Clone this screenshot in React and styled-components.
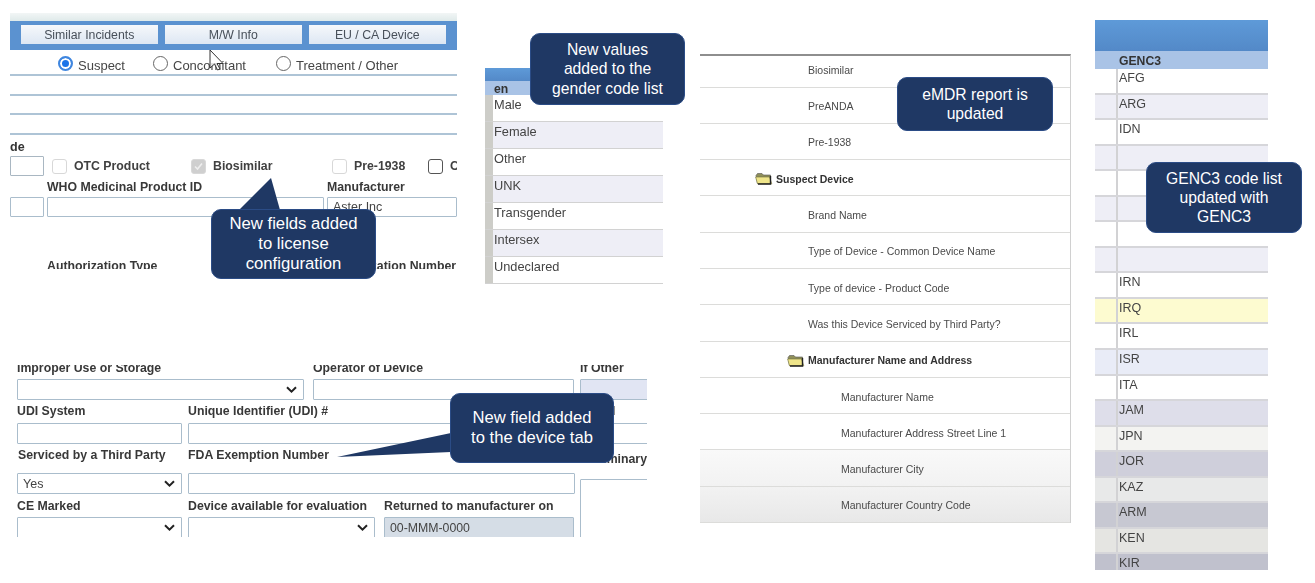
import React from "react";
import styled, { createGlobalStyle } from "styled-components";

const Global = createGlobalStyle`
  html, body { margin: 0; padding: 0; background: #fff; }
  body { font-family: "Liberation Sans", Arial, sans-serif; }
`;

const Canvas = styled.div`
  position: relative;
  width: 1315px;
  height: 583px;
  overflow: hidden;
  background: #fff;
`;

const Shot = styled.section`
  position: absolute;
  left: ${(p) => p.$x}px;
  top: ${(p) => p.$y}px;
  width: ${(p) => p.$w}px;
  height: ${(p) => p.$h}px;
  overflow: hidden;
  background: #fff;
  color: #333;
  filter: blur(0.5px);
`;

const Strip = styled.div`
  height: 8px;
  background: linear-gradient(#f2f6f6, #dfeaea);
`;

const BlueBar = styled.div`
  height: 29px;
  box-sizing: border-box;
  padding: 4px 11px;
  display: flex;
  gap: 7.5px;
  background: #5b92d0;
`;

const TabButton = styled.div`
  width: 136.5px;
  height: 19px;
  display: flex;
  align-items: center;
  justify-content: center;
  font-size: 12.3px;
  color: #48505a;
  background: linear-gradient(#f6f8fb, #dde7f3);
`;

const RadioRow = styled.div`
  height: 26px;
  box-sizing: border-box;
  padding-left: 48px;
  display: flex;
  align-items: center;
  border-bottom: 2px solid #aec4d6;
`;

const RadioItem = styled.div`
  width: ${(p) => p.$w}px;
  display: flex;
  align-items: center;
  gap: 5px;
  font-size: 13px;
  color: #454545;
  padding-top: 6px;
  box-sizing: border-box;
`;

const Radio = styled.span`
  width: 15px;
  height: 15px;
  box-sizing: border-box;
  margin-top: -4px;
  border-radius: 50%;
  flex: none;
  border: ${(p) => (p.$on ? "2px solid #3f86df" : "1px solid #666")};
  box-shadow: ${(p) => (p.$on ? "inset 0 0 0 2px #fff" : "none")};
  background-color: ${(p) => (p.$on ? "#1a73e8" : "#fff")};
`;

const BlankLine = styled.div`
  height: ${(p) => p.$h}px;
  box-sizing: border-box;
  border-bottom: 2px solid #aec4d6;
`;

const TinyLabel = styled.div`
  height: 21px;
  box-sizing: border-box;
  padding-top: 5px;
  font-size: 12.5px;
  line-height: 14px;
  font-weight: 700;
  color: #333;
`;

const Row = styled.div`
  display: flex;
  height: ${(p) => p.$h}px;
  margin-top: ${(p) => p.$mt || 0}px;
  padding-left: ${(p) => p.$pl || 0}px;
`;

const Cell = styled.div`
  width: ${(p) => p.$w}px;
  flex: none;
  margin-left: ${(p) => p.$ml || 0}px;
`;

const Label = styled(Cell)`
  font-size: 12.3px;
  font-weight: 700;
  line-height: ${(p) => p.$lh || 14}px;
  white-space: nowrap;
  color: #383838;
  text-align: ${(p) => p.$align || "left"};
`;

const Field = styled(Cell)`
  height: ${(p) => p.$fh || 20}px;
  margin-top: ${(p) => p.$mt || 0}px;
  box-sizing: border-box;
  border: 1.5px solid ${(p) => p.$line || "#aabdcc"};
  border-radius: 1px;
  background: ${(p) => p.$bg || "#fff"};
  display: flex;
  align-items: center;
  justify-content: space-between;
  padding: 0 6px 0 5px;
  font-size: ${(p) => p.$fs || 12}px;
  color: #444;
  white-space: nowrap;
`;

const CheckItem = styled(Cell)`
  display: flex;
  align-items: center;
  gap: 7px;
  height: 20px;
  font-size: 12.3px;
  font-weight: 700;
  color: #404040;
`;

const Check = styled.span`
  width: 15px;
  height: 15px;
  box-sizing: border-box;
  border-radius: 3px;
  flex: none;
  display: flex;
  align-items: center;
  justify-content: center;
  border: 1px solid ${(p) => (p.$dark ? "#555" : "#d8d8d8")};
  background: ${(p) => (p.$on ? "#cfcfcf" : "#fff")};
`;

const ListBlue = styled.div`
  height: ${(p) => p.$h}px;
  background: linear-gradient(#5e9ad8, #5389c8);
`;

const ListHead = styled.div`
  height: ${(p) => p.$h}px;
  box-sizing: border-box;
  padding-left: ${(p) => p.$pl}px;
  background: #a9c3e6;
  font-size: 12.2px;
  font-weight: 700;
  line-height: ${(p) => p.$h + 2}px;
  color: #333;
`;

const GenderRow = styled.div`
  height: 27px;
  box-sizing: border-box;
  display: flex;
  border-bottom: 1.5px solid #d2d2d2;
  background: ${(p) => (p.$alt ? "#eeeef6" : "#fff")};
`;

const Gutter = styled.div`
  width: 8px;
  flex: none;
  background: #cdcdc8;
`;

const GenderText = styled.div`
  padding: 2px 0 0 1px;
  font-size: 12.8px;
  line-height: 15px;
  color: #444;
`;

const ReportShot = styled(Shot)`
  box-sizing: border-box;
  border-top: 2px solid #8e8e8e;
  border-right: 1px solid #d0d0d0;
`;

const ReportRow = styled.div`
  height: ${(p) => (p.$first ? 31.5 : 36.3)}px;
  box-sizing: border-box;
  display: flex;
  align-items: center;
  padding-left: ${(p) => p.$pl}px;
  padding-top: ${(p) => (p.$first ? 0 : 2)}px;
  padding-bottom: ${(p) => (p.$first ? 3 : 0)}px;
  gap: 3px;
  font-size: 10.5px;
  font-weight: ${(p) => (p.$bold ? 700 : 400)};
  color: ${(p) => (p.$bold ? "#333" : "#4a4a4a")};
  border-bottom: 1.5px solid #dcdcda;
  background: ${(p) => p.$bg || "#fff"};
`;

const CodeRow = styled.div`
  height: 25.55px;
  box-sizing: border-box;
  display: flex;
  border-bottom: 2px solid #d6d6da;
  background: ${(p) => p.$bg};
`;

const CodeSide = styled.div`
  width: 23px;
  flex: none;
  box-sizing: border-box;
  border-right: 2px solid #d2d2d4;
`;

const CodeText = styled.div`
  padding: 2px 0 0 1px;
  font-size: 12.5px;
  line-height: 15px;
  color: #444;
`;

const Callout = styled.aside`
  position: absolute;
  left: ${(p) => p.$x}px;
  top: ${(p) => p.$y}px;
  width: ${(p) => p.$w}px;
  height: ${(p) => p.$h}px;
  box-sizing: border-box;
  display: flex;
  align-items: center;
  justify-content: center;
  text-align: center;
  background: #1f3864;
  border: 1px solid #2b4c86;
  border-radius: 10px;
  color: #fff;
  font-size: ${(p) => p.$fs}px;
  line-height: ${(p) => p.$lh}px;
`;

const Tail = styled.svg`
  position: absolute;
  left: 0;
  top: 0;
  overflow: visible;
  pointer-events: none;
`;

const Cursor = styled.svg`
  position: absolute;
  left: 209px;
  top: 49px;
`;

const Chevron = () => (
  <svg width="11" height="7" viewBox="0 0 11 7">
    <path d="M1 1.2 5.5 5.6 10 1.2" fill="none" stroke="#222" strokeWidth="2" />
  </svg>
);

const Folder = () => (
  <svg width="18" height="13" viewBox="0 0 18 13">
    <path d="M1 3.5 2.5 1.5H7L8.5 3H15.5V11.5H2.5Z" fill="#8f8f5a" stroke="#555" strokeWidth=".6" />
    <path d="M.6 5H14.5L16.8 11.8H2.5Z" fill="#efe58a" stroke="#6d6d3a" strokeWidth=".6" />
    <path d="M15.5 4V12H3" fill="none" stroke="#222" strokeWidth="1.4" />
  </svg>
);

const genders = ["Male", "Female", "Other", "UNK", "Transgender", "Intersex", "Undeclared"];

const report = [
  { t: "Biosimilar", pl: 108 },
  { t: "PreANDA", pl: 108 },
  { t: "Pre-1938", pl: 108 },
  { t: "Suspect Device", pl: 55, folder: true },
  { t: "Brand Name", pl: 108 },
  { t: "Type of Device - Common Device Name", pl: 108 },
  { t: "Type of device - Product Code", pl: 108 },
  { t: "Was this Device Serviced by Third Party?", pl: 108 },
  { t: "Manufacturer Name and Address", pl: 87, folder: true },
  { t: "Manufacturer Name", pl: 141 },
  { t: "Manufacturer Address Street Line 1", pl: 141 },
  { t: "Manufacturer City", pl: 141, bg: "linear-gradient(#f9f9f9,#f2f2f2)" },
  { t: "Manufacturer Country Code", pl: 141, bg: "linear-gradient(#f2f2f2,#e8e8e8)" },
];

const codes = [
  ["AFG", "#fff"],
  ["ARG", "#eeeef6"],
  ["IDN", "#fff"],
  ["", "#eeeef6"],
  ["", "#fff"],
  ["", "#eeeef6"],
  ["", "#fff"],
  ["", "#eeeef6"],
  ["IRN", "#fff"],
  ["IRQ", "#fdfbd0"],
  ["IRL", "#fff"],
  ["ISR", "#e9ecf7"],
  ["ITA", "#fff"],
  ["JAM", "#dedeea"],
  ["JPN", "#f3f3f1"],
  ["JOR", "#cfcfdb"],
  ["KAZ", "#e8e9e9"],
  ["ARM", "#c7c8d2"],
  ["KEN", "#e5e5e2"],
  ["KIR", "#c0c1cd"],
];

export default function App() {
  return (
    <Canvas>
      <Global />

      <Shot $x={10} $y={13} $w={447} $h={256}>
        <Strip />
        <BlueBar>
          <TabButton>Similar Incidents</TabButton>
          <TabButton>M/W Info</TabButton>
          <TabButton>EU / CA Device</TabButton>
        </BlueBar>
        <RadioRow>
          <RadioItem $w={95}><Radio $on />Suspect</RadioItem>
          <RadioItem $w={123}><Radio />Concomitant</RadioItem>
          <RadioItem $w={130}><Radio />Treatment / Other</RadioItem>
        </RadioRow>
        <BlankLine $h={20} />
        <BlankLine $h={19} />
        <BlankLine $h={20} />
        <TinyLabel>de</TinyLabel>
        <Row $h={20}>
          <Field $w={34} $line="#a9b7c2" />
          <CheckItem $w={139} $ml={8}><Check />OTC Product</CheckItem>
          <CheckItem $w={141}>
            <Check $on>
              <svg width="11" height="11" viewBox="0 0 11 11">
                <path d="M2 5.5 4.5 8 9 2.5" fill="none" stroke="#eee" strokeWidth="1.6" />
              </svg>
            </Check>
            Biosimilar
          </CheckItem>
          <CheckItem $w={96}><Check />Pre-1938</CheckItem>
          <CheckItem $w={40}><Check $dark />C</CheckItem>
        </Row>
        <Row $h={20} $mt={1}>
          <Label $w={277} $ml={37} $lh={20}>WHO Medicinal Product ID</Label>
          <Label $w={130} $ml={3} $lh={20}>Manufacturer</Label>
        </Row>
        <Row $h={20}>
          <Field $w={34} />
          <Field $w={277} $ml={3} />
          <Field $w={130} $ml={3} $fs={12.5}>Aster Inc</Field>
        </Row>
        <Row $h={20} $mt={41}>
          <Label $w={277} $ml={37} $lh={16}>Authorization Type</Label>
          <Label $w={130} $ml={3} $lh={16}>Authorization Number</Label>
        </Row>
      </Shot>

      <Shot $x={15} $y={365} $w={632} $h={172}>
        <Row $h={14} $pl={2}>
          <Label $w={287} $lh={6}>Improper Use or Storage</Label>
          <Label $w={261} $ml={9} $lh={6}>Operator of Device</Label>
          <Label $w={60} $ml={6} $lh={6}>If Other</Label>
        </Row>
        <Row $h={21} $pl={2}>
          <Field $w={287} $fh={21}><span /><Chevron /></Field>
          <Field $w={261} $ml={9} $fh={21} />
          <Field $w={70} $ml={6} $fh={21} $bg="#e1e5f3" />
        </Row>
        <Row $h={23} $pl={2}>
          <Label $w={165} $lh={23}>UDI System</Label>
          <Label $w={387} $ml={6} $lh={23}>Unique Identifier (UDI) #</Label>
          <Label $w={60} $ml={5} $lh={23}>Model</Label>
        </Row>
        <Row $h={21} $pl={2}>
          <Field $w={165} $fh={21} />
          <Field $w={387} $ml={6} $fh={21} />
          <Field $w={70} $ml={5} $fh={21} />
        </Row>
        <Row $h={29} $pl={3}>
          <Label $w={164} $lh={22}>Serviced by a Third Party</Label>
          <Label $w={387} $ml={6} $lh={22}>FDA Exemption Number</Label>
          <Label $w={66} $ml={5} $lh={30} $align="right">Preliminary</Label>
        </Row>
        <Row $h={21} $pl={2}>
          <Field $w={165} $fh={21} $fs={12.5}>Yes<Chevron /></Field>
          <Field $w={387} $ml={6} $fh={21} />
          <Field $w={70} $ml={5} $fh={70} $mt={6} />
        </Row>
        <Row $h={23} $pl={2}>
          <Label $w={165} $lh={25}>CE Marked</Label>
          <Label $w={187} $ml={6} $lh={25}>Device available for evaluation</Label>
          <Label $w={190} $ml={9} $lh={25}>Returned to manufacturer on</Label>
        </Row>
        <Row $h={21} $pl={2}>
          <Field $w={165} $fh={21}><span /><Chevron /></Field>
          <Field $w={187} $ml={6} $fh={21}><span /><Chevron /></Field>
          <Field $w={190} $ml={9} $fh={21} $bg="#d5dde6" $fs={12.3}>00-MMM-0000</Field>
        </Row>
      </Shot>

      <Shot $x={485} $y={68} $w={178} $h={219}>
        <ListBlue $h={13} />
        <ListHead $h={14} $pl={9}>en</ListHead>
        {genders.map((g, i) => (
          <GenderRow key={g} $alt={i % 2 === 1}>
            <Gutter />
            <GenderText>{g}</GenderText>
          </GenderRow>
        ))}
      </Shot>

      <ReportShot $x={700} $y={54} $w={371} $h={469}>
        {report.map((r, i) => (
          <ReportRow key={r.t} $first={i === 0} $pl={r.pl} $bold={r.folder} $bg={r.bg}>
            {r.folder && <Folder />}
            {r.t}
          </ReportRow>
        ))}
      </ReportShot>

      <Shot $x={1095} $y={20} $w={173} $h={550}>
        <ListBlue $h={31} />
        <ListHead $h={18} $pl={24}>GENC3</ListHead>
        {codes.map(([c, bg], i) => (
          <CodeRow key={i} $bg={bg}>
            <CodeSide />
            <CodeText>{c}</CodeText>
          </CodeRow>
        ))}
      </Shot>

      <Cursor width="16" height="22" viewBox="0 0 16 22">
        <path d="M1 1V19L5.5 15 8.5 21 11 20 8 14.5H14Z" fill="#fff" fillOpacity=".75" stroke="#333" strokeWidth="1" />
      </Cursor>

      <Tail width="1315" height="583">
        <path d="M271 178 239 210H280Z" fill="#1f3864" />
        <path d="M337 457 451 433V452Z" fill="#1f3864" />
      </Tail>

      <Callout $x={211} $y={209} $w={165} $h={70} $fs={16.7} $lh={20.3}>New fields added<br />to license<br />configuration</Callout>
      <Callout $x={450} $y={393} $w={164} $h={70} $fs={16.6} $lh={20}>New field added<br />to the device tab</Callout>
      <Callout $x={530} $y={33} $w={155} $h={72} $fs={15.7} $lh={19.3}>New values<br />added to the<br />gender code list</Callout>
      <Callout $x={897} $y={77} $w={156} $h={54} $fs={15.7} $lh={19.3}>eMDR report is<br />updated</Callout>
      <Callout $x={1146} $y={162} $w={156} $h={71} $fs={15.7} $lh={19.3}>GENC3 code list<br />updated with<br />GENC3</Callout>
    </Canvas>
  );
}
